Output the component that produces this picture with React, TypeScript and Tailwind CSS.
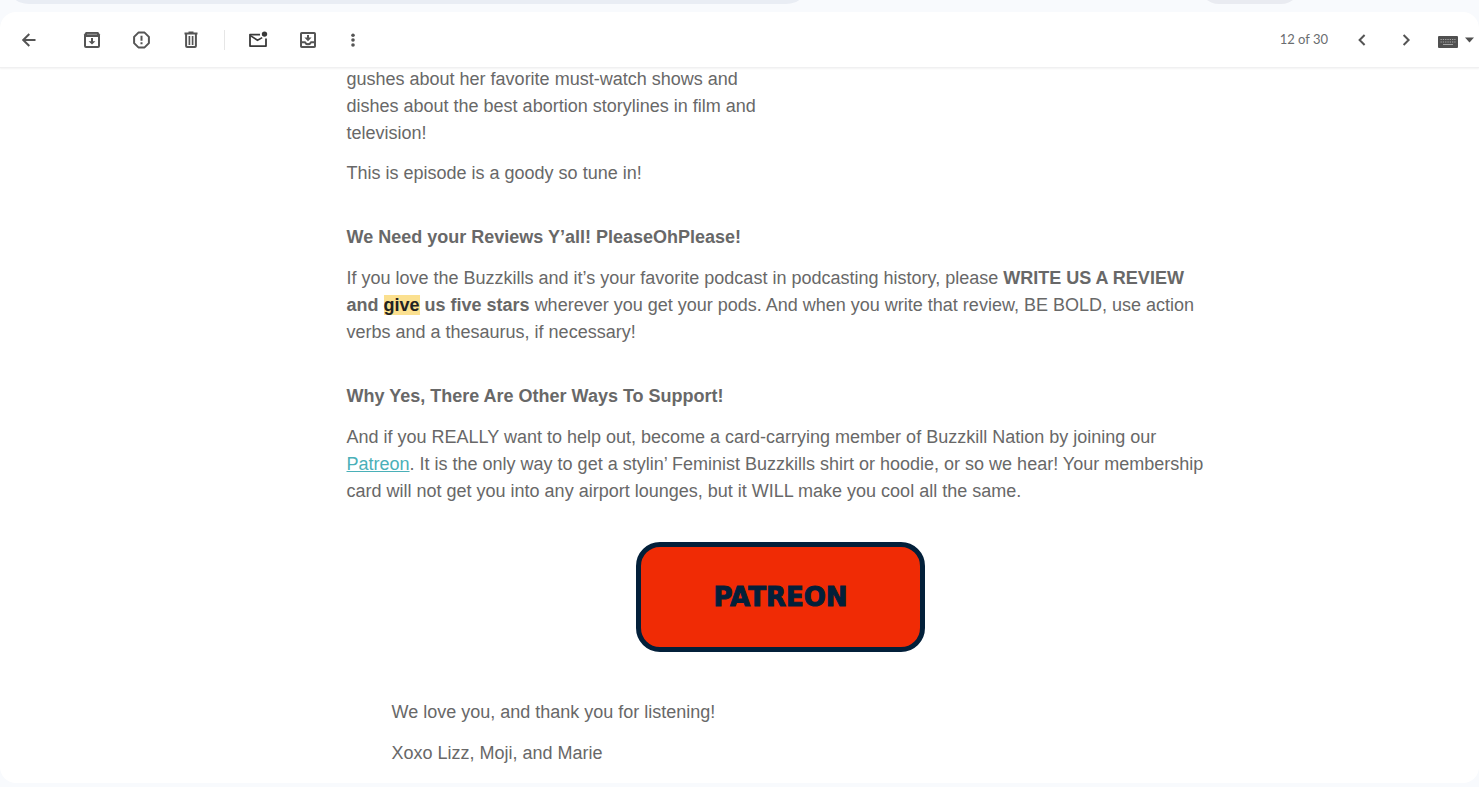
import type { ReactNode } from 'react';

interface IconButtonProps {
  label: string;
  children: ReactNode;
}

function IconButton({ label, children }: IconButtonProps) {
  return (
    <button type="button" aria-label={label} className="shrink-0 cursor-pointer text-[#555]">
      <svg viewBox="0 0 20 20" fill="none" stroke="currentColor" strokeWidth="2" className="size-5">
        {children}
      </svg>
    </button>
  );
}

function Toolbar() {
  return (
    <div className="relative z-10 flex h-14 shrink-0 items-center rounded-t-2xl border-b border-[#f0f0f1] bg-white pr-1 pl-[19px] shadow-[0_1px_2px_rgba(0,0,0,0.05)]">
      <IconButton label="Back to inbox">
        <path d="M16.5 10H4.5M10.3 4L4.2 10l6.1 6" />
      </IconButton>

      <div className="ml-[43px] flex items-center gap-[29px]">
        <IconButton label="Archive">
          <path d="M3 5.5V16a1 1 0 0 0 1 1h12a1 1 0 0 0 1-1V5.5" />
          <path d="M3.8 2h12.4L18 4.4V7H2V4.4z" fill="currentColor" stroke="none" />
          <path d="M5 4.3h10" stroke="#aaa" strokeWidth="0.8" />
          <path d="M9 8h2v3.2h2.4L10 14.6l-3.4-3.4H9z" fill="currentColor" stroke="none" />
        </IconButton>
        <IconButton label="Report spam">
          <path d="M7.4 2.6h6.200L17.900 6.900v6.200L13.600 17.400H7.400L3.100 13.100V6.900z" strokeLinejoin="round" />
          <path d="M10.5 5.800v5" />
          <path d="M10.5 12.200v2" />
        </IconButton>
        <IconButton label="Delete">
          <path d="M4.500 3.500h13M8.500 2.600h5" />
          <path d="M6.100 4v12a1 1 0 0 0 1 1h7.800a1 1 0 0 0 1-1V4" />
          <path d="M9.400 6v9M12.600 6v9" strokeWidth="1.700" />
        </IconButton>
      </div>

      <div className="mr-[23px] ml-6 h-5 w-px bg-[#e6e6e6]" />

      <div className="flex items-center gap-[30px]">
        <button type="button" aria-label="Mark as unread" className="shrink-0 cursor-pointer text-[#3a3a3a]">
          <svg viewBox="0 0 20 20" fill="none" stroke="currentColor" strokeWidth="1.8" className="size-5">
            <path d="M12 4.6H2v11.500h16V8.400" strokeLinejoin="round" />
            <path d="M2.400 5.600L9.500 10.200l4.700-2.600" strokeWidth="1.600" />
            <circle cx="16.500" cy="4.100" r="2.700" fill="currentColor" stroke="none" />
          </svg>
        </button>
        <IconButton label="Move to inbox">
          <rect x="3" y="3" width="14" height="14" rx="0.8" />
          <path d="M3 12.200h3.800c.6 1.400 1.700 2.100 3.200 2.100s2.600-.7 3.200-2.100H17" />
          <path d="M9 5h2v2.400h2.600L10 11.200 6.400 7.400H9z" fill="currentColor" stroke="none" />
        </IconButton>
      </div>

      <div className="ml-[25px] flex">
        <IconButton label="More options">
          <g fill="currentColor" stroke="none">
            <circle cx="10" cy="5.2" r="1.8" />
            <circle cx="10" cy="10" r="1.8" />
            <circle cx="10" cy="15" r="1.8" />
          </g>
        </IconButton>
      </div>

      <span className="ml-auto font-['Lato',sans-serif] text-[13px] text-[#6a6d70]">12 of 30</span>

      <div className="ml-6 flex items-center gap-6">
        <IconButton label="Newer">
          <path d="M12.6 5L7.6 10l5 5" />
        </IconButton>
        <IconButton label="Older">
          <path d="M7.6 5l5 5-5 5" />
        </IconButton>
      </div>

      <button
        type="button"
        aria-label="Select input tool"
        className="ml-[22px] shrink-0 cursor-pointer text-[#505050]"
      >
        <svg viewBox="0 0 37 20" className="h-5 w-[37px]">
          <rect x="0" y="6" width="20" height="12" rx="1" fill="currentColor" />
          <path
            d="M2.5 9.5h15M2.5 12h15"
            stroke="#a5a5a5"
            strokeWidth="1.2"
            strokeDasharray="1.3 1"
          />
          <path d="M5 14.5h10" stroke="#a5a5a5" strokeWidth="1.2" />
          <path d="M27 7.500h9L31.500 12.500z" fill="currentColor" />
        </svg>
      </button>
    </div>
  );
}

function Message() {
  return (
    <article className="mx-auto -mt-0.5 max-w-[868px] text-lg leading-[27px] text-[#686868]">
      <div className="max-w-[424px]">
        <p>
          gushes about her favorite must-watch shows and dishes about the best abortion storylines in
          film and television!
        </p>
        <p className="mt-[13px]">This is episode is a goody so tune in!</p>
      </div>

      <section className="mt-[37px]">
        <h2 className="font-bold">We Need your Reviews Y’all! PleaseOhPlease!</h2>
        <p className="mt-3.5">
          If you love the Buzzkills and it’s your favorite podcast in podcasting history, please{' '}
          <strong>
            WRITE US A REVIEW and <mark className="bg-[#fbe08f] text-[#222]">give</mark> us five stars
          </strong>{' '}
          wherever you get your pods. And when you write that review, BE BOLD, use action verbs and a
          thesaurus, if necessary!
        </p>
      </section>

      <section className="mt-[37px]">
        <h2 className="font-bold">Why Yes, There Are Other Ways To Support!</h2>
        <p className="mt-3.5">
          And if you REALLY want to help out, become a card-carrying member of Buzzkill Nation by
          joining our{' '}
          <a href="#patreon" className="text-[#4ab0b8] underline">
            Patreon
          </a>
          . It is the only way to get a stylin’ Feminist Buzzkills shirt or hoodie, or so we hear!
          Your membership card will not get you into any airport lounges, but it WILL make you cool
          all the same.
        </p>
      </section>

      <div className="mt-[37px] flex justify-center">
        <a
          id="patreon"
          href="#patreon"
          className="flex h-[110px] w-[289px] items-center justify-center rounded-[24px] border-5 border-[#03203a] bg-[#f02b05] font-['Arial_Black','DejaVu_Sans',sans-serif] text-[26px] font-black text-[#03203a] [-webkit-text-stroke:1px_#03203a]"
        >
          PATREON
        </a>
      </div>

      <div className="mt-[47px] px-[45px]">
        <p>We love you, and thank you for listening!</p>
        <p className="mt-3.5">Xoxo Lizz, Moji, and Marie</p>
      </div>
    </article>
  );
}

export default function App() {
  return (
    <div className="flex h-screen flex-col overflow-hidden bg-[#f8fafd] font-['Liberation_Sans',Arial,sans-serif]">
      {/* Bottom edge of the scrolled search bar */}
      <header className="flex h-3 shrink-0 items-end justify-between overflow-hidden pr-[178px] pb-2 pl-[5px]">
        <div className="h-12 w-[805px] shrink-0 rounded-full bg-[#e9edf4]" />
        <div className="h-10 w-[102px] shrink-0 rounded-full bg-[#e9ebf1]" />
      </header>

      <main className="mb-1 flex min-h-0 flex-1 flex-col overflow-hidden rounded-2xl bg-white">
        <Toolbar />
        <div className="min-h-0 flex-1 overflow-hidden pl-[82px]">
          <Message />
        </div>
      </main>
    </div>
  );
}
